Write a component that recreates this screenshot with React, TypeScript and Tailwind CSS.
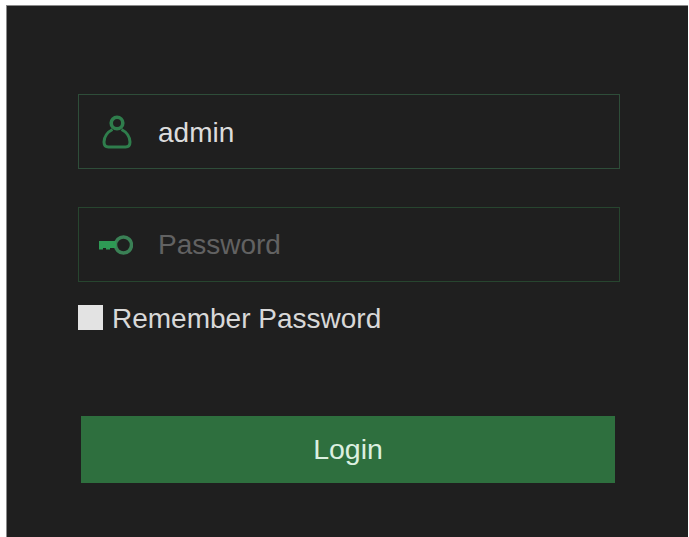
import { useState } from "react";

function UserIcon() {
  return (
    <svg className="w-[30px] h-[34px]" viewBox="0 0 30 34" fill="none" stroke="#2f7d4c" strokeWidth="3">
      <circle cx="15" cy="8" r="5.8" strokeWidth="3.6" />
      <path d="M10.5 14.5 C5.5 17 2 22 2 27 C2 30.5 4 32 6.5 32 H23.5 C26 32 28 30.5 28 27 C28 22 24.5 17 19.5 14.5" />
    </svg>
  );
}

function KeyIcon() {
  return (
    <svg className="w-[34px] h-[22px] -ml-[1px]" viewBox="0 0 34 22" fill="none">
      <circle cx="24.5" cy="11" r="8" stroke="#3a8055" strokeWidth="3.5" />
      <path d="M0 7 H17 V14 H11 V15.5 H7 V14 H4 V15.5 H0 Z" fill="#2e9a55" />
    </svg>
  );
}

export default function App() {
  const [remember, setRemember] = useState(false);

  return (
    <div className="w-[689px] h-[537px] bg-white pt-[5px] pl-[6px] pr-[1px] font-['Liberation_Sans',Arial,sans-serif]">
      <div className="h-full bg-[#1f1f1f] pt-[88px] pl-[71px] pr-[68px] border-l border-t border-[#8a8a8a]">
        {/* Username */}
        <div className="h-[75px] border border-[#2e4d39] flex items-center">
          <div className="w-[79px] pr-[4px] flex justify-center">
            <UserIcon />
          </div>
          <span className="text-[28px] text-[#dcdcdc] pt-[2px]">admin</span>
        </div>

        {/* Password */}
        <div className="h-[75px] mt-[38px] border border-[#27452f] flex items-center">
          <div className="w-[79px] pr-[4px] flex justify-center">
            <KeyIcon />
          </div>
          <input
            type="password"
            placeholder="Password"
            className="flex-1 min-w-0 bg-transparent outline-none text-[28px] text-[#dcdcdc] placeholder:text-[#626262]"
          />
        </div>

        {/* Remember */}
        <label className="mt-[22px] flex items-center gap-[9px] h-[26px]">
          <input
            type="checkbox"
            checked={remember}
            onChange={(e) => setRemember(e.target.checked)}
            className="appearance-none w-[25px] h-[25px] bg-[#e3e3e3]"
          />
          <span className="text-[28px] text-[#d8d8d8] whitespace-nowrap pt-[4px]">Remember Password</span>
        </label>

        {/* Login */}
        <button className="block mt-[86px] ml-[3px] w-[534px] h-[67px] bg-[#2e6f3e] text-[28.5px] text-[#dcefe0]">
          Login
        </button>
      </div>
    </div>
  );
}
